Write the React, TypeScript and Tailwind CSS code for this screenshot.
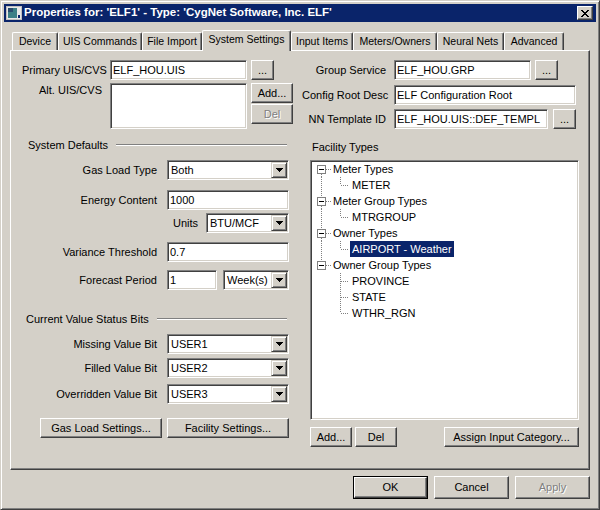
import React from 'react';
import clsx from 'clsx';

const sunken =
  'border border-t-[#808080] border-l-[#808080] border-r-white border-b-white shadow-[inset_1px_1px_0_#404040,inset_-1px_-1px_0_#d4d0c8]';
const raised =
  'border border-t-white border-l-white border-r-[#404040] border-b-[#404040] shadow-[inset_-1px_-1px_0_#808080]';

const Button: React.FC<{ className?: string; disabled?: boolean; children: React.ReactNode }> = ({
  className,
  disabled,
  children,
}) => (
  <div
    className={clsx(
      'flex shrink-0 items-center justify-center whitespace-nowrap bg-[#d4d0c8]',
      raised,
      disabled && 'text-[#808080] [text-shadow:1px_1px_0_#fff]',
      className
    )}
  >
    {children}
  </div>
);

const Field: React.FC<{ className?: string; value?: string }> = ({ className, value }) => (
  <div className={clsx('flex shrink-0 items-center bg-white pl-[2px] whitespace-nowrap', sunken, className)}>{value}</div>
);

const Select: React.FC<{ className?: string; value: string }> = ({ className, value }) => (
  <div className={clsx('flex h-[20px] shrink-0 items-stretch bg-white pl-[3px] whitespace-nowrap', sunken, className)}>
    <span className="flex flex-1 items-center">{value}</span>
    <span className="m-[1px] flex w-[16px] items-center justify-center border border-t-[#d4d0c8] border-l-[#d4d0c8] border-r-[#404040] border-b-[#404040] bg-[#d4d0c8] shadow-[inset_1px_1px_0_#fff,inset_-1px_-1px_0_#808080]">
      <svg width="7" height="4" viewBox="0 0 7 4" shapeRendering="crispEdges">
        <path d="M0 0h7v1h-1v1h-1v1h-1v1h-1v-1h-1v-1h-1v-1h-1z" fill="#000" />
      </svg>
    </span>
  </div>
);

const FormRow: React.FC<{ label: string; className?: string; children: React.ReactNode }> = ({
  label,
  className,
  children,
}) => (
  <div className={clsx('flex h-[20px] items-center', className)}>
    <span className="w-[135px] pr-0 text-right whitespace-nowrap">{label}</span>
    <div className="ml-[10px] flex w-[122px] justify-between">{children}</div>
  </div>
);

const Heading: React.FC<{ label: string; className?: string }> = ({ label, className }) => (
  <div className={clsx('flex h-[14px] items-center', className)}>
    <span className="whitespace-nowrap">{label}</span>
    <span className="ml-[8px] mr-[6px] h-[2px] flex-1 border-t border-t-[#808080] border-b border-b-white" />
  </div>
);

const tabs = [
  { label: 'Device', w: 46 },
  { label: 'UIS Commands', w: 84 },
  { label: 'File Import', w: 60 },
  { label: 'System Settings', w: 89, active: true },
  { label: 'Input Items', w: 62 },
  { label: 'Meters/Owners', w: 84 },
  { label: 'Neural Nets', w: 67 },
  { label: 'Advanced', w: 60 },
];

const dots = { stroke: '#808080', strokeDasharray: '1 1', fill: 'none' };

const ParentRow: React.FC<{ label: string; first?: boolean; last?: boolean }> = ({ label, first, last }) => (
  <div className="flex h-[16px] items-center">
    <svg width="20" height="16" viewBox="0 0 20 16" shapeRendering="crispEdges" className="shrink-0">
      {!first && <path d="M10.5 0V4" {...dots} />}
      {!last && <path d="M10.5 13V16" {...dots} />}
      <path d="M15 8.5H20" {...dots} />
      <rect x="6.5" y="4.5" width="8" height="8" fill="#fff" stroke="#808080" />
      <path d="M8 8.5H13" stroke="#000" />
    </svg>
    <span className="px-[2px] whitespace-nowrap">{label}</span>
  </div>
);

const ChildRow: React.FC<{ label: string; trunk?: boolean; more?: boolean; selected?: boolean }> = ({
  label,
  trunk,
  more,
  selected,
}) => (
  <div className="flex h-[16px] items-center">
    <svg width="39" height="16" viewBox="0 0 39 16" shapeRendering="crispEdges" className="shrink-0">
      {trunk && <path d="M10.5 0V16" {...dots} />}
      <path d={more ? 'M29.5 0V16' : 'M29.5 0V8'} {...dots} />
      <path d="M30 8.5H37" {...dots} />
    </svg>
    <span className={clsx('flex h-[16px] items-center px-[2px] whitespace-nowrap', selected && 'bg-[#0a246a] text-white')}>
      {label}
    </span>
  </div>
);

export default function App() {
  return (
    <div className="h-[510px] w-[600px] overflow-hidden border border-t-[#d4d0c8] border-l-[#d4d0c8] border-r-[#404040] border-b-[#404040] bg-[#d4d0c8] font-['Liberation_Sans',Arial,sans-serif] text-[11px] leading-none text-[#000] shadow-[inset_1px_1px_0_#fff,inset_-1px_-1px_0_#808080]">
      {/* Title bar */}
      <div className="mx-[3px] mt-[3px] flex h-[18px] items-center bg-[#0a246a] pl-[2px] pr-[3px]">
        <svg width="16" height="14" viewBox="0 0 16 14" shapeRendering="crispEdges" className="shrink-0">
          <rect width="15" height="13" x="0.5" y="0.5" fill="#e8e8e8" stroke="#c0c0c0" />
          <rect x="2" y="2" width="9" height="10" fill="#3c7f86" />
          <rect x="2" y="2" width="5" height="4" fill="#2a4c6e" />
          <rect x="12" y="9" width="2" height="3" fill="#0a246a" />
        </svg>
        <span className="ml-[2px] text-[11.5px] font-bold whitespace-nowrap text-white">
          Properties for: 'ELF1' - Type: 'CygNet Software, Inc. ELF'
        </span>
        <div className={clsx('ml-auto flex h-[14px] w-[16px] items-center justify-center bg-[#d4d0c8]', raised)}>
          <svg width="8" height="7" viewBox="0 0 8 7" shapeRendering="crispEdges">
            <path d="M0 0h2v1h1v1h2v-1h1v-1h2v1h-1v1h-1v1h-1v1h1v1h1v1h1v1h-2v-1h-1v-1h-2v1h-1v1h-2v-1h1v-1h1v-1h1v-1h-1v-1h-1v-1h-1z" fill="#000" />
          </svg>
        </div>
      </div>

      {/* Tabs */}
      <div className="relative z-10 ml-[11px] mt-[8px] flex h-[21px] items-start text-[10.5px]">
        {tabs.map((t) => (
          <div
            key={t.label}
            style={{ width: t.w }}
            className={clsx(
              'flex shrink-0 items-center justify-center rounded-t-[2px] border-t border-l border-r border-t-white border-l-white border-r-[#404040] bg-[#d4d0c8] whitespace-nowrap shadow-[inset_-1px_0_0_#808080]',
              t.active ? 'mt-0 h-[21px] pb-[3px]' : 'mt-[2px] h-[18px]'
            )}
          >
            {t.label}
          </div>
        ))}
      </div>

      {/* Tab page */}
      <div className="-mt-[1px] ml-[9px] flex h-[420px] w-[580px] border border-t-white border-l-white border-r-[#404040] border-b-[#404040] pl-[11px] pt-[9px] shadow-[inset_-1px_-1px_0_#808080]">
        {/* Left column */}
        <div className="w-[280px] shrink-0">
          <div className="flex h-[20px] items-center">
            <span className="w-[80px] text-right whitespace-nowrap">Primary UIS/CVS</span>
            <Field className="ml-[8px] h-[20px] w-[137px]" value="ELF_HOU.UIS" />
            <Button className="ml-[4px] h-[20px] w-[23px]">...</Button>
          </div>
          <div className="mt-[3px] flex items-start">
            <span className="w-[80px] pt-[2px] text-right whitespace-nowrap">Alt. UIS/CVS</span>
            <Field className="ml-[8px] h-[46px] w-[137px]" />
            <div className="ml-[4px] flex flex-col gap-[1px]">
              <Button className="h-[20px] w-[42px]">Add...</Button>
              <Button className="h-[20px] w-[42px]" disabled>
                Del
              </Button>
            </div>
          </div>

          <Heading label="System Defaults" className="mt-[9px] w-[271px] pl-[6px]" />
          <FormRow label="Gas Load Type" className="mt-[8px]">
            <Select className="w-full" value="Both" />
          </FormRow>
          <FormRow label="Energy Content" className="mt-[10px]">
            <Field className="h-[20px] w-full" value="1000" />
          </FormRow>
          <div className="mt-[3px] flex h-[20px] items-center">
            <span className="w-[176px] text-right">Units</span>
            <Select className="ml-[8px] w-[83px]" value="BTU/MCF" />
          </div>
          <FormRow label="Variance Threshold" className="mt-[9px]">
            <Field className="h-[20px] w-full" value="0.7" />
          </FormRow>
          <FormRow label="Forecast Period" className="mt-[8px]">
            <Field className="h-[20px] w-[50px]" value="1" />
            <Select className="w-[66px]" value="Week(s)" />
          </FormRow>

          <Heading label="Current Value Status Bits" className="mt-[22px] w-[271px] pl-[4px]" />
          <FormRow label="Missing Value Bit" className="mt-[8px]">
            <Select className="w-full" value="USER1" />
          </FormRow>
          <FormRow label="Filled Value Bit" className="mt-[4px]">
            <Select className="w-full" value="USER2" />
          </FormRow>
          <FormRow label="Overridden Value Bit" className="mt-[6px]">
            <Select className="w-full" value="USER3" />
          </FormRow>

          <div className="ml-[18px] mt-[14px] flex gap-[5px]">
            <Button className="h-[20px] w-[122px]">Gas Load Settings...</Button>
            <Button className="h-[20px] w-[122px]">Facility Settings...</Button>
          </div>
        </div>

        {/* Right column */}
        <div className="w-[277px] shrink-0">
          <div className="flex h-[20px] items-center">
            <span className="w-[84px] text-right whitespace-nowrap">Group Service</span>
            <Field className="ml-[8px] h-[20px] w-[137px]" value="ELF_HOU.GRP" />
            <Button className="ml-[4px] h-[20px] w-[23px]">...</Button>
          </div>
          <div className="mt-[5px] flex h-[20px] items-center">
            <span className="w-[84px] text-right whitespace-nowrap">Config Root Desc</span>
            <Field className="ml-[8px] h-[20px] w-[182px]" value="ELF Configuration Root" />
          </div>
          <div className="mt-[4px] flex h-[20px] items-center">
            <span className="w-[84px] text-right whitespace-nowrap">NN Template ID</span>
            <Field className="ml-[8px] h-[20px] w-[154px]" value="ELF_HOU.UIS::DEF_TEMPL" />
            <Button className="ml-[5px] h-[20px] w-[23px]">...</Button>
          </div>

          <div className="ml-[10px] mt-[11px] flex h-[14px] items-center">Facility Types</div>

          <div className={clsx('ml-[8px] mt-[6px] h-[260px] w-[269px] bg-white', sunken)}>
            <ParentRow label="Meter Types" first />
            <ChildRow label="METER" trunk />
            <ParentRow label="Meter Group Types" />
            <ChildRow label="MTRGROUP" trunk />
            <ParentRow label="Owner Types" />
            <ChildRow label="AIRPORT - Weather" trunk selected />
            <ParentRow label="Owner Group Types" last />
            <ChildRow label="PROVINCE" more />
            <ChildRow label="STATE" more />
            <ChildRow label="WTHR_RGN" />
          </div>

          <div className="ml-[8px] mt-[7px] flex w-[269px] gap-[3px]">
            <Button className="h-[20px] w-[42px]">Add...</Button>
            <Button className="h-[20px] w-[42px]">Del</Button>
            <Button className="ml-auto h-[20px] w-[135px]">Assign Input Category...</Button>
          </div>
        </div>
      </div>

      {/* Dialog buttons */}
      <div className="ml-[352px] mt-[6px] flex gap-[6px]">
        <div className="h-[23px] w-[75px] border border-black">
          <Button className="h-full w-full">OK</Button>
        </div>
        <Button className="h-[23px] w-[75px]">Cancel</Button>
        <Button className="h-[23px] w-[75px]" disabled>
          Apply
        </Button>
      </div>
    </div>
  );
}
